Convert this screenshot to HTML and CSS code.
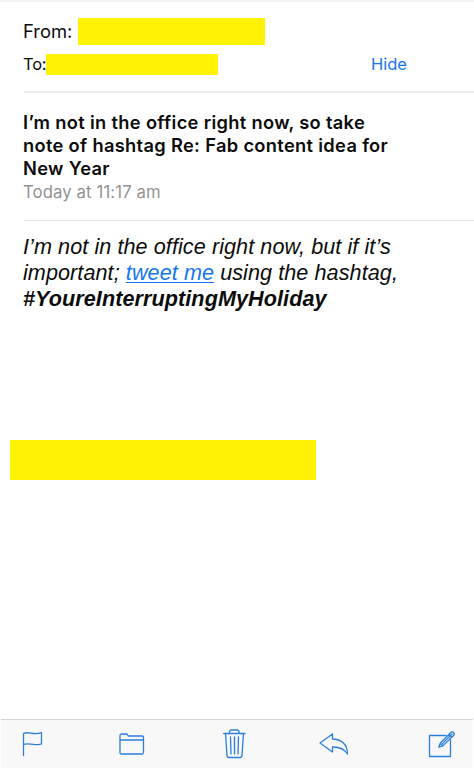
FILE: index.html
```html
<!DOCTYPE html>
<html lang="en">
<head>
<meta charset="utf-8">
<title>Mail</title>
<link rel="stylesheet" href="styles.css">
</head>
<body>
<main class="message">
  <header class="people">
    <div class="row from"><span class="from-label">From:</span><span class="redacted sender"></span></div>
    <div class="row to"><span class="to-label">To:</span><span class="redacted recipient"></span><a class="hide">Hide</a></div>
  </header>
  <section class="summary">
    <h1 class="subject">I’m not in the office right now, so take<br>note of hashtag Re: Fab content idea for<br>New Year</h1>
    <div class="date">Today at 11:17 am</div>
  </section>
  <section class="body">
    I’m not in the office right now, but if it’s<br>important; <a class="link">tweet me</a> using the hashtag,<br><strong>#YoureInterruptingMyHoliday</strong>
  </section>
  <div class="redacted signature"></div>
</main>
<nav class="toolbar">
  <svg class="flag" width="22" height="26" viewBox="0 0 22 26"><path d="M1.5 24.500V2.500C6-.2 11 4.600 19.500 1.700V12.800C11 15.700 7 11 1.500 13.500"/></svg>
  <svg class="folder" width="26" height="22" viewBox="0 0 26 22"><path d="M1 19V2.500Q1 1 2.500 1H7.200Q8.200 1 8.700 2L9.300 3H23Q24.500 3 24.500 4.500V19.500Q24.500 21 23 21H2.500Q1 21 1 19.500ZM1 7H24.500"/></svg>
  <svg class="trash" width="24" height="30" viewBox="0 0 24 30"><path d="M.6 4.500H22M2.500 4.500L4 26.500Q4.100 28.500 6 28.500H17Q18.900 28.500 19 26.500L20.500 4.500M6.500 4.500V3Q6.500 1 8.500 1H14Q16 1 16 3V4.500M7.500 8L8 25M11.500 8V25M15.500 8L15 25"/></svg>
  <svg class="reply" width="30" height="24" viewBox="0 0 30 24"><path d="M1 11L13.500 2V7C22 7 28.500 12 28.500 22C25 16.500 20 14.800 13.500 15V20Z"/></svg>
  <svg class="compose" width="28" height="28" viewBox="0 0 28 28"><path d="M18 5.500H1.500V26.500H22.500V10"/><path d="M10.800 17.200L12.200 13.200L22.600 2.800Q24 1.200 25.600 2.400Q27 4 25.500 5.500L14.900 15.900ZM12.200 13.200L14.900 15.900M21 4.400L23.900 7.200M13.500 14.600L24 4"/></svg>
</nav>
</body>
</html>
```

FILE: styles.css
```css
* { box-sizing: border-box; }
body {
  margin: 0;
  height: 770px;
  display: flex;
  flex-direction: column;
  background: #fff;
  color: #0c0c0c;
  border-top: 2px solid #f1f1f1;
  font-family: Inter, "Liberation Sans", sans-serif;
  white-space: nowrap;
  overflow: hidden;
}
.message { flex: 1; padding-left: 24px; }
.redacted { background: #fff204; display: block; }
.people { height: 91px; padding-top: 16px; border-bottom: 2px solid #efefef; }
.row { display: flex; }
.from-label, .to-label, .subject, .date, .body { margin-left: -1px; }
.from { height: 27px; font-size: 18.4px; line-height: 26px; }
.from-label { width: 55px; }
.sender { width: 187px; height: 27px; }
.to { height: 21px; margin-top: 9px; font-size: 16.5px; line-height: 20px; }
.to-label { width: 23px; letter-spacing: -0.2px; }
.recipient { width: 172px; height: 21px; }
.hide { margin-left: 153px; color: #1677ee; }
.summary { height: 128px; padding-top: 17.5px; border-bottom: 1px solid #e4e4e4; }
.subject { margin-top: 0; margin-bottom: 0; font-size: 18.3px; font-weight: 600; line-height: 23.3px; letter-spacing: 0.32px; }
.date { font-size: 16.7px; line-height: 24px; color: #929292; letter-spacing: 0.12px; }
.body { padding-top: 12.5px; height: 219px; font-family: "Liberation Sans", sans-serif; font-size: 21.6px; font-style: italic; line-height: 26.2px; letter-spacing: 0.075px; }
.link { color: #1677ee; text-decoration: underline; text-decoration-thickness: 1px; text-underline-offset: 2px; }
.signature { width: 306px; height: 40px; margin-left: -14px; }
.toolbar {
  height: 49px;
  margin: 0 1px 2px;
  padding-left: 21px;
  display: flex;
  align-items: center;
  background: #f8f8f8;
  border-top: 1px solid #d5d5d5;
}
.toolbar svg { flex: none; fill: none; stroke: #2b7fdb; stroke-width: 1.3; stroke-linejoin: round; stroke-linecap: round; }
.folder { margin-left: 74.5px; }
.trash { margin-left: 78.5px; }
.reply { margin-left: 72px; }
.compose { margin-left: 79px; }
```
